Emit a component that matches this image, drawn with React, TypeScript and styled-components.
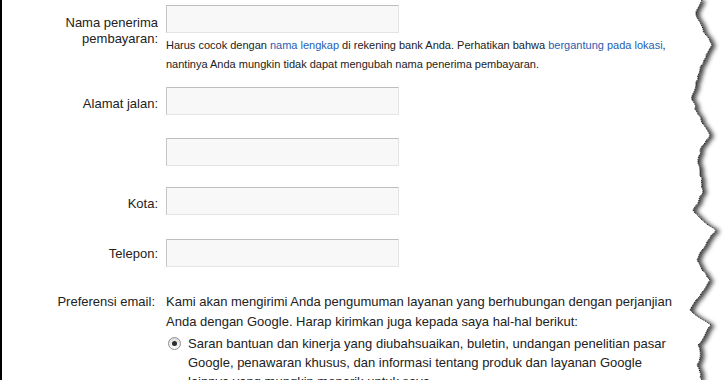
import styled, { createGlobalStyle } from 'styled-components';

const GlobalStyle = createGlobalStyle`
  body {
    margin: 0;
    background: #fff;
    font-family: 'Liberation Sans', Arial, sans-serif;
  }
`;

const Page = styled.div`
  display: flex;
  width: 724px;
  height: 380px;
  overflow: hidden;
  box-sizing: border-box;
  border-left: 2px solid #000;
  background: #fff;
`;

const Form = styled.div`
  flex: 1;
  padding-top: 5px;
`;

// one label + field pair; $gap is the space above the row
const Row = styled.div<{ $gap: number }>`
  display: grid;
  grid-template-columns: 156px 1fr;
  column-gap: 8px;
  margin-top: ${(p) => p.$gap}px;
`;

const Label = styled.div<{ $pad?: number; $right?: number }>`
  text-align: right;
  font-size: 13px;
  line-height: ${(p) => (p.$pad === 0 ? 20 : 16)}px;
  color: #222;
  padding-top: ${(p) => p.$pad ?? 9}px;
  padding-right: ${(p) => p.$right ?? 0}px;
`;

const Input = styled.input`
  display: block;
  box-sizing: border-box;
  width: 233px;
  height: 28px;
  margin: 0;
  border: 1px solid;
  border-color: #bdbdbd #e4e4e4 #e4e4e4 #c6c6c6;
  background: #f8f8f8;
  outline: none;
`;

const Help = styled.p`
  margin: 3px 0 0;
  max-width: 515px;
  font-size: 11px;
  line-height: 19px;
  color: #222;
`;

const Link = styled.a`
  color: #2a5db0;
  text-decoration: none;
`;

const Text = styled.p`
  margin: 0;
  max-width: 515px;
  font-size: 13px;
  line-height: 20px;
  color: #222;
`;

const Option = styled.label`
  display: flex;
  align-items: flex-start;
  gap: 7px;
  margin-top: 2px;
  padding-left: 2px;
  max-width: 513px;
  font-size: 13px;
  line-height: 19px;
  color: #222;
`;

const Radio = styled.span<{ $on: boolean }>`
  flex: none;
  position: relative;
  width: 13px;
  height: 13px;
  margin-top: 3px;
  box-sizing: border-box;
  border-radius: 50%;
  border: 1px solid #8e8e8e;
  background: linear-gradient(#dcdcdc, #fbfbfb);
  &::after {
    content: '';
    display: ${(p) => (p.$on ? 'block' : 'none')};
    position: absolute;
    left: 3px;
    top: 3px;
    width: 5px;
    height: 5px;
    border-radius: 50%;
    background: #2b2b2b;
  }
`;

const Edge = styled.svg`
  flex: none;
  width: 44px;
  height: 380px;
`;

// torn paper edge: main points in svg coords (page x - 680)
const EDGE = [
  [22, 0], [18, 8], [16, 15], [20, 22], [26, 35], [32, 45], [28, 52], [24, 60],
  [20, 70], [16, 85], [12, 100], [17, 112], [21, 120], [26, 128], [30, 135],
  [25, 143], [20, 150], [18, 160], [20, 170], [23, 190], [19, 200], [13, 210],
  [20, 218], [28, 225], [36, 230], [30, 238], [24, 248], [17, 260], [22, 270],
  [30, 280], [24, 290], [16, 300], [10, 310], [20, 318], [31, 325], [25, 335],
  [18, 345], [20, 358], [17, 365], [20, 372], [22, 380],
];

const tornPoints = () => {
  const pts: string[] = [];
  let seed = 7;
  const rnd = () => {
    seed = (seed * 9301 + 49297) % 233280;
    return seed / 233280 - 0.5;
  };
  for (let i = 0; i < EDGE.length - 1; i++) {
    const [x1, y1] = EDGE[i];
    const [x2, y2] = EDGE[i + 1];
    const steps = Math.max(1, Math.round((y2 - y1) / 3));
    for (let s = 0; s < steps; s++) {
      const t = s / steps;
      const x = x1 + (x2 - x1) * t + (s === 0 ? 0 : rnd() * 2.5);
      pts.push(`${x.toFixed(1)},${(y1 + (y2 - y1) * t).toFixed(1)}`);
    }
  }
  pts.push(`${EDGE[EDGE.length - 1][0]},380`);
  return pts;
};

const TornEdge = () => {
  const line = tornPoints();
  const paper = `0,-5 ${line.join(' ')} 0,385`;
  return (
    <Edge viewBox="0 0 44 380">
      <defs>
        <filter id="paperShadow" x="-20%" y="-5%" width="160%" height="110%">
          <feDropShadow dx="4" dy="1" stdDeviation="2.2" floodColor="#000" floodOpacity="0.7" />
        </filter>
      </defs>
      <polygon points={paper} fill="#fff" filter="url(#paperShadow)" />
      <polyline points={line.join(' ')} fill="none" stroke="#111" strokeWidth="1" strokeDasharray="1.2 0.8" />
    </Edge>
  );
};

const App = () => (
  <Page>
    <GlobalStyle />
    <Form>
      <Row $gap={0}>
        <Label $pad={10}>
          Nama penerima
          <br />
          pembayaran:
        </Label>
        <div>
          <Input />
          <Help>
            Harus cocok dengan <Link href="#">nama lengkap</Link> di rekening bank Anda. Perhatikan bahwa{' '}
            <Link href="#">bergantung pada lokasi</Link>, nantinya Anda mungkin tidak dapat mengubah nama penerima
            pembayaran.
          </Help>
        </div>
      </Row>
      <Row $gap={13}>
        <Label>Alamat jalan:</Label>
        <Input />
      </Row>
      <Row $gap={23}>
        <Label />
        <Input />
      </Row>
      <Row $gap={21}>
        <Label>Kota:</Label>
        <Input />
      </Row>
      <Row $gap={24}>
        <Label $pad={7}>Telepon:</Label>
        <Input />
      </Row>
      <Row $gap={25}>
        <Label $pad={0} $right={3}>
          Preferensi email:
        </Label>
        <div>
          <Text>
            Kami akan mengirimi Anda pengumuman layanan yang berhubungan dengan perjanjian Anda dengan Google. Harap
            kirimkan juga kepada saya hal-hal berikut:
          </Text>
          <Option>
            <Radio $on />
            <span>
              Saran bantuan dan kinerja yang diubahsuaikan, buletin, undangan penelitian pasar Google, penawaran
              khusus, dan informasi tentang produk dan layanan Google lainnya yang mungkin menarik untuk saya.
            </span>
          </Option>
        </div>
      </Row>
    </Form>
    <TornEdge />
  </Page>
);

export default App;
